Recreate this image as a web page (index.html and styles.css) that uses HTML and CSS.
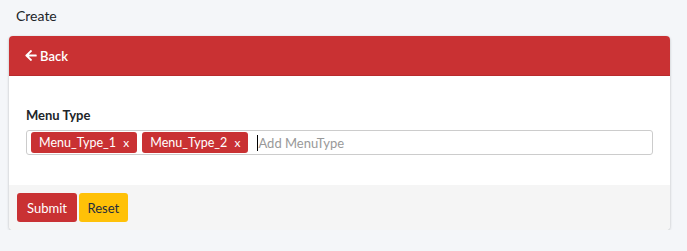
FILE: index.html
```html
<!DOCTYPE html>
<html lang="en">
<head>
    <meta charset="UTF-8">
    <meta name="viewport" content="width=device-width, initial-scale=1.0">
    <title>Create</title>
    <link rel="stylesheet" href="styles.css">
</head>
<body>
    <div class="page-title">Create</div>

    <div class="card">
        <div class="card-header">
            <a class="back-link" href="#">
                <svg class="back-icon" viewBox="0 0 448 512" width="12" height="13">
                    <path fill="#fff" d="M257.5 445.1l-22.2 22.2c-9.4 9.4-24.6 9.4-33.9 0L7 273c-9.4-9.4-9.4-24.6 0-33.9L201.4 44.7c9.4-9.4 24.6-9.4 33.9 0l22.2 22.2c9.5 9.5 9.3 25-.4 34.3L136.6 216H424c13.3 0 24 10.7 24 24v32c0 13.3-10.7 24-24 24H136.6l120.5 114.8c9.8 9.3 10 24.8.4 34.3z"/>
                </svg>
                Back
            </a>
        </div>

        <div class="card-body">
            <label class="field-label">Menu Type</label>
            <div class="tag-input">
                <span class="tag">Menu_Type_1 <span class="tag-remove">x</span></span>
                <span class="tag">Menu_Type_2 <span class="tag-remove">x</span></span>
                <span class="caret"></span>
                <input type="text" placeholder="Add MenuType">
            </div>
        </div>

        <div class="card-footer">
            <button class="btn btn-submit">Submit</button>
            <button class="btn btn-reset">Reset</button>
        </div>
    </div>
</body>
</html>
```

FILE: styles.css
```css
body {
    margin: 0;
    background-color: #f4f6f9;
    font-family: Lato, "Noto Sans", sans-serif;
    color: #212529;
    font-size: 13px;
}
.page-title {
    padding: 8px 16px 0 16px;
    height: 20px;
    font-size: 14px;
    line-height: 16px;
}
.card {
    margin: 8px 17px 0 9px;
    background-color: #fff;
    border-radius: 4px;
    box-shadow: 0 0 1px rgba(0,0,0,.13), 0 1px 3px rgba(0,0,0,.2);
    overflow: hidden;
}
.card-header {
    background-color: #c93133;
    height: 40px;
    display: flex;
    align-items: center;
    padding-left: 16px;
    border-bottom: 1px solid #b82b2d;
    box-sizing: border-box;
}
.back-link {
    color: #fff;
    text-decoration: none;
    font-size: 13px;
    font-weight: 600;
    display: flex;
    align-items: center;
    gap: 3px;
}
.card-body {
    padding: 31px 17px 30px 17px;
}
.field-label {
    display: block;
    font-weight: bold;
    font-size: 13px;
    line-height: 16px;
    margin-bottom: 7px;
}
.tag-input {
    display: flex;
    align-items: center;
    gap: 5px;
    height: 25px;
    box-sizing: border-box;
    border: 1px solid #ccc;
    border-radius: 3px;
    padding: 0 4px;
}
.tag {
    background-color: #c93133;
    color: #fff;
    border-radius: 3px;
    height: 21px;
    line-height: 21px;
    padding: 0 8px;
    font-size: 12.5px;
    white-space: nowrap;
}
.tag-remove {
    margin-left: 4px;
    font-size: 12px;
}
.caret {
    width: 1px;
    height: 16px;
    background-color: #000;
    margin-left: 4px;
}
.tag-input input {
    border: none;
    outline: none;
    flex: 1;
    padding: 0;
    margin-left: -5px;
    font-family: inherit;
    font-size: 13px;
}
.tag-input input::placeholder {
    color: #999;
}
.card-footer {
    background-color: #f5f5f5;
    padding: 8px;
    display: flex;
    gap: 2px;
}
.btn {
    height: 29px;
    border: none;
    border-radius: 3px;
    font-family: inherit;
    font-size: 13px;
    cursor: pointer;
}
.btn-submit {
    background-color: #c93133;
    color: #fff;
    padding: 0 10px;
}
.btn-reset {
    background-color: #ffc107;
    color: #1f2d3d;
    padding: 0 8.5px;
}
```
